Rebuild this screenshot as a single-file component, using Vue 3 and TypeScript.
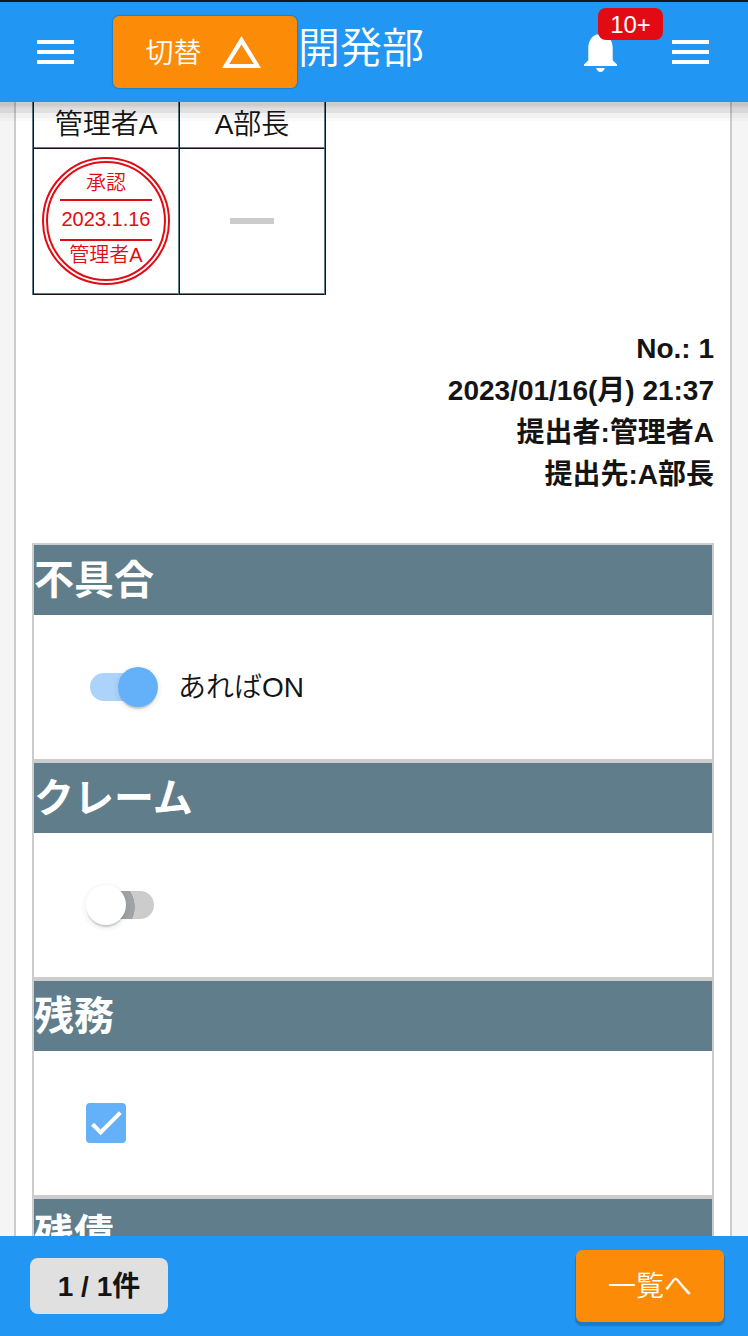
<script setup lang="ts">
interface Section {
  title: string
  kind: 'switch' | 'check' | 'none'
  on?: boolean
  label?: string
}

const meta: string[] = ['No.: 1', '2023/01/16(月) 21:37', '提出者:管理者A', '提出先:A部長']

const sections: Section[] = [
  { title: '不具合', kind: 'switch', on: true, label: 'あればON' },
  { title: 'クレーム', kind: 'switch', on: false },
  { title: '残務', kind: 'check' },
  { title: '残債', kind: 'none' },
]
</script>

<template>
  <div class="app">
    <header class="bar">
      <button class="icon menu-left" aria-label="menu">
        <svg width="37" height="24" viewBox="0 0 37 24"><path d="M0 0h37v4H0zM0 10h37v4H0zM0 20h37v4H0z" fill="#fff" /></svg>
      </button>
      <button class="btn switcher">
        <span>切替</span>
        <svg width="39" height="32" viewBox="0 0 39 32"><path d="M19.5 0L39 32H0zM19.5 8.500L7.200 28H31.800z" fill="#fff" fill-rule="evenodd" /></svg>
      </button>
      <h1 class="title">開発部</h1>
      <div class="bell">
        <svg width="33" height="40" viewBox="0 0 33 40">
          <path d="M12.500 2.500C7.300 4.500 4.300 9.500 4.300 16V28.300L0 32.500V34H33V32.500L28.700 28.300V16C28.700 9.500 25.700 4.500 20.500 2.500zM12.200 36c.4 2.300 2.100 4 4.300 4s3.900-1.700 4.300-4z" fill="#fff" />
        </svg>
        <span class="badge">10+</span>
      </div>
      <button class="icon" aria-label="menu">
        <svg width="37" height="24" viewBox="0 0 37 24"><path d="M0 0h37v4H0zM0 10h37v4H0zM0 20h37v4H0z" fill="#fff" /></svg>
      </button>
    </header>

    <main class="main">
      <div class="card">
        <div class="approval">
          <div class="cell name">管理者A</div>
          <div class="cell name">A部長</div>
          <div class="cell box">
            <div class="stamp">
              <div class="ring">
                <span class="s-top">承認</span>
                <span class="s-mid">2023.1.16</span>
                <span class="s-bot">管理者A</span>
              </div>
            </div>
          </div>
          <div class="cell box"><span class="dash"></span></div>
        </div>

        <div class="meta">
          <div v-for="m in meta" :key="m">{{ m }}</div>
        </div>

        <section v-for="s in sections" :key="s.title" class="sec">
          <h2>{{ s.title }}</h2>
          <div class="body">
            <template v-if="s.kind === 'switch'">
              <span class="switch" :class="{ on: s.on }"><span class="track"></span><span class="thumb"></span></span>
              <span v-if="s.label" class="label">{{ s.label }}</span>
            </template>
            <span v-else-if="s.kind === 'check'" class="check">
              <svg width="40" height="40" viewBox="3 3 18 18"><path d="M9.600 17.500L5.300 13.200l1.300-1.300 3 3 8.200-8.200 1.300 1.300z" fill="#fff" /></svg>
            </span>
          </div>
        </section>
      </div>
    </main>

    <footer class="foot">
      <span class="count">1 / 1件</span>
      <button class="btn list">一覧へ</button>
    </footer>
  </div>
</template>

<style>
html,
body {
  margin: 0;
  overflow: hidden;
}
</style>

<style scoped>
.app {
  box-sizing: border-box;
  width: 748px;
  height: 1336px;
  border-top: 2px solid #15181b;
  display: flex;
  flex-direction: column;
  overflow: hidden;
  background: #f5f5f5;
  color: #141414;
  font-family: 'Liberation Sans', 'Noto Sans CJK JP', sans-serif;
  font-size: 28px;
}
button {
  border: 0;
  padding: 0;
  background: none;
  color: #fff;
  font: inherit;
}
svg {
  display: block;
}
.bar {
  position: relative;
  z-index: 1;
  flex: none;
  height: 100px;
  display: flex;
  align-items: center;
  padding: 0 39px 0 37px;
  box-sizing: border-box;
  background: #2196f3;
  color: #fff;
}
.bar::after {
  content: '';
  position: absolute;
  left: 0;
  right: 0;
  top: 100px;
  height: 19px;
  background: linear-gradient(rgba(0, 0, 0, 0.2) 0 4px, rgba(20, 0, 0, 0.16) 4px 6px, rgba(0, 0, 0, 0.12) 6px 11px, rgba(0, 0, 0, 0.05) 11px 16px, rgba(0, 0, 0, 0.02) 16px);
}
.menu-left {
  margin-right: 39px;
}
.btn {
  box-sizing: border-box;
  display: flex;
  align-items: center;
  justify-content: center;
  height: 72px;
  border-radius: 6px;
  background: #fc8c08;
  font-weight: 350;
  box-shadow: 0 3px 1px 1px rgba(30, 70, 110, 0.35);
}
.switcher {
  width: 184px;
  gap: 20px;
  padding-right: 4px;
  box-shadow: 0 0 1px 1px rgba(30, 70, 110, 0.3);
}
.switcher span {
  padding-bottom: 3px;
}
.title {
  margin: 0 auto 6px 1px;
  font-size: 42px;
  line-height: 60px;
  font-weight: 350;
}
.bell {
  position: relative;
  margin: 0 55px 0 0;
}
.badge {
  position: absolute;
  left: 14px;
  top: -24px;
  width: 65px;
  height: 32px;
  border-radius: 8px;
  background: #e30b13;
  font-size: 24px;
  line-height: 33px;
  text-align: center;
}
.main {
  flex: 1;
  min-height: 0;
  overflow: hidden;
}
.card {
  margin: 0 16px 0 14px;
  padding: 0 16px;
  border: solid #ccc;
  border-width: 0 2px;
  background: #fff;
}
.approval {
  display: grid;
  grid-template-columns: 146px 146px;
  grid-template-rows: 47px 146px;
  width: 292px;
  border-left: 1px solid #607d8b;
  border-right: 1px solid #141414;
}
.cell {
  box-sizing: border-box;
  display: flex;
  align-items: center;
  justify-content: center;
  border-left: 1px solid #141414;
  border-right: 1px solid #607d8b;
  border-bottom: 1px solid #141414;
  box-shadow: inset 0 -1px #607d8b;
}
.name {
  font-weight: 350;
  line-height: 42px;
  padding-bottom: 1px;
}
.box {
  padding-bottom: 1px;
}
.stamp {
  box-sizing: border-box;
  width: 128px;
  height: 128px;
  padding: 2px;
  border: 2px solid #e30b13;
  border-radius: 50%;
}
.ring {
  box-sizing: border-box;
  height: 120px;
  border: 2px solid #e30b13;
  border-radius: 50%;
  display: flex;
  flex-direction: column;
  align-items: center;
  color: #e30b13;
  font-size: 20px;
  font-weight: 350;
  line-height: 30px;
  white-space: nowrap;
}
.s-top {
  height: 31px;
  padding-top: 5px;
}
.s-mid {
  width: 92px;
  height: 38px;
  line-height: 37px;
  text-align: center;
  border: solid #e30b13;
  border-width: 2px 0;
}
.s-bot {
  line-height: 28px;
}
.dash {
  width: 44px;
  height: 6px;
  background: #ccc;
}
.meta {
  margin: 33px 0 47px;
  text-align: right;
  font-weight: 700;
  line-height: 42px;
}
.meta div {
  height: 42px;
}
.sec {
  border: 2px solid #ccc;
}
h2 {
  margin: 0;
  height: 70px;
  font-size: 40px;
  line-height: 71px;
  font-weight: 700;
  background: #607d8b;
  color: #fff;
}
.body {
  height: 144px;
  padding-left: 52px;
  display: flex;
  align-items: center;
}
.switch {
  position: relative;
  width: 72px;
  height: 40px;
}
.track {
  position: absolute;
  left: 4px;
  top: 6px;
  width: 64px;
  height: 28px;
  border-radius: 14px;
  background: radial-gradient(circle at 16px 16px, #9ea3a8 28.5px, #ccc 29px);
}
.on .track {
  background: #acd3fc;
}
.thumb {
  position: absolute;
  left: 0;
  top: 0;
  width: 40px;
  height: 40px;
  border-radius: 50%;
  background: #fff;
  box-shadow: 0 3px 2px -1px rgba(0, 0, 0, 0.22), 0 2px 0 4px rgba(0, 0, 0, 0.025);
}
.on .thumb {
  left: 32px;
  background: #64b0f9;
}
.label {
  margin-left: 20px;
  padding-bottom: 4px;
  font-weight: 350;
}
.check {
  border-radius: 4px;
  background: #64b0f9;
}
.foot {
  flex: none;
  height: 100px;
  box-sizing: border-box;
  padding: 0 24px 0 30px;
  display: flex;
  align-items: center;
  justify-content: space-between;
  background: #2196f3;
}
.count {
  width: 138px;
  height: 56px;
  border-radius: 8px;
  background: #e0e0e0;
  line-height: 58px;
  text-align: center;
  font-weight: 700;
}
.list {
  width: 148px;
  padding-bottom: 4px;
}
</style>
